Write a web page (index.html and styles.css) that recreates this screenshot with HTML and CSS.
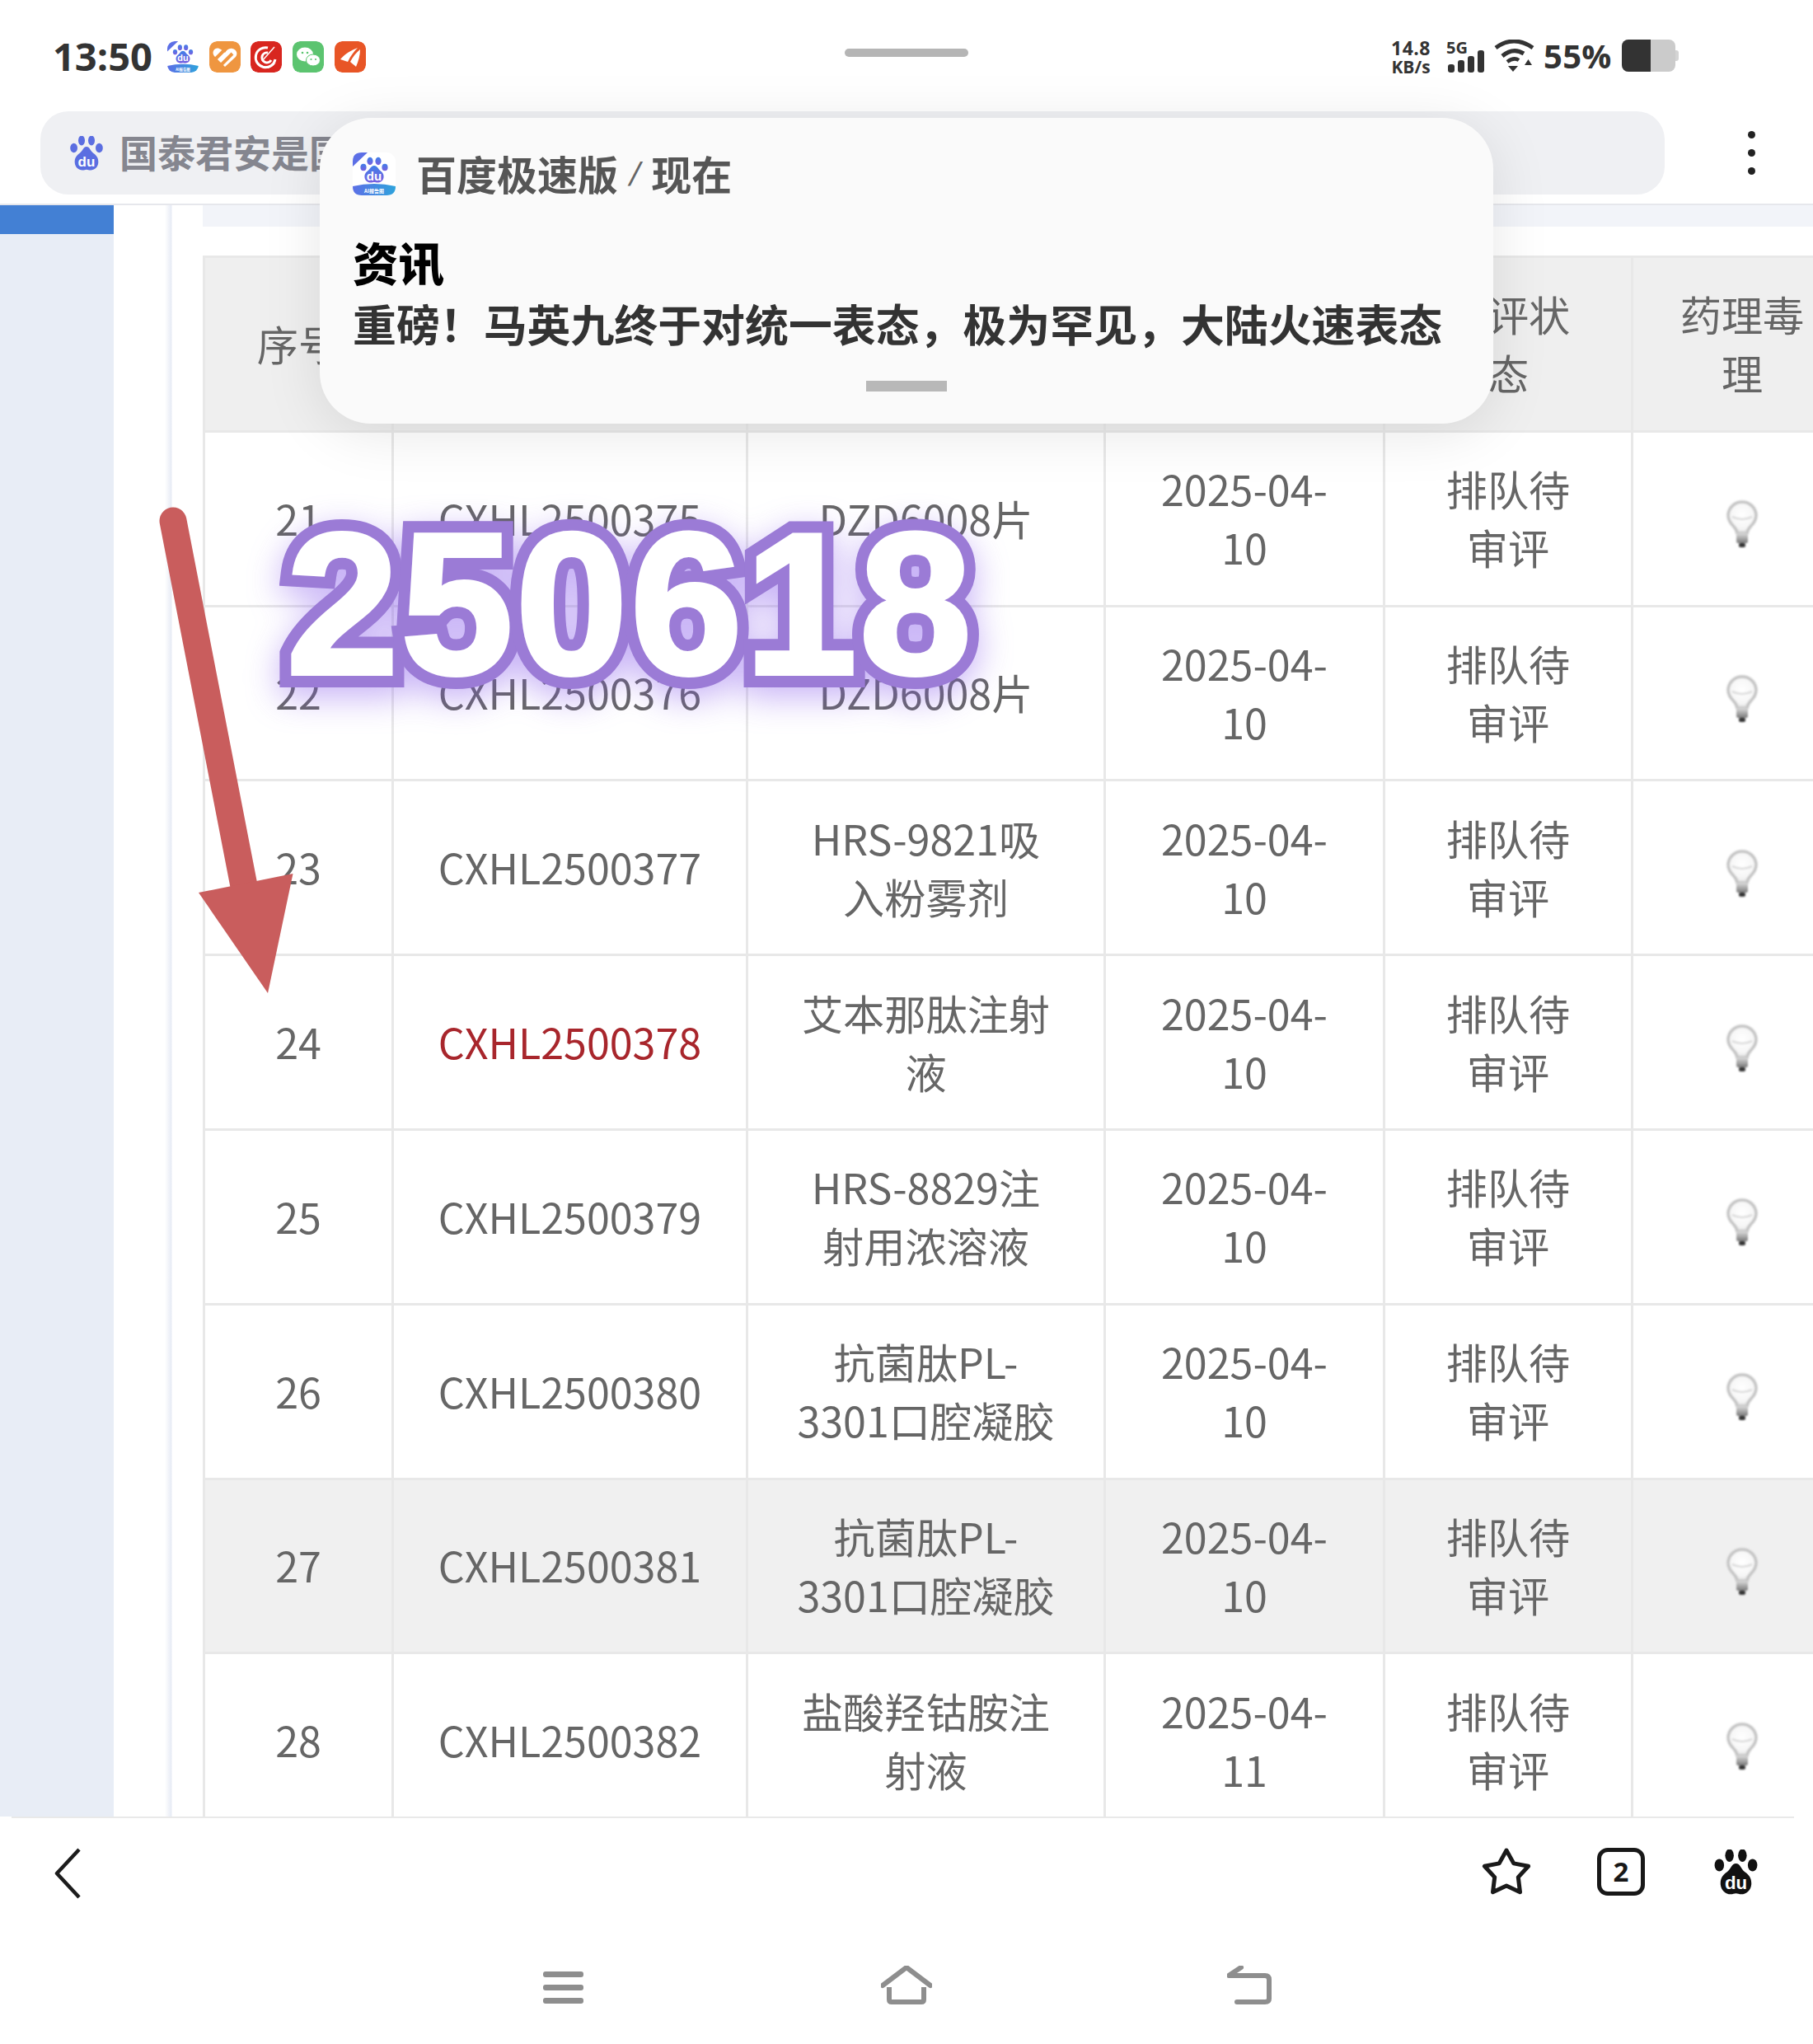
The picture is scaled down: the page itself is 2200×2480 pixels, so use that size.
FILE: index.html
```html
<!DOCTYPE html>
<html lang="zh-CN">
<head>
<meta charset="utf-8">
<title>药品审评列表</title>
<link rel="stylesheet" href="styles.css">
</head>
<body>
<svg class="defs" width="0" height="0" aria-hidden="true">
  <defs>
    <linearGradient id="pawGrad" x1="0" y1="0" x2="0" y2="1">
      <stop offset="0" stop-color="#3f7fe8"/><stop offset="1" stop-color="#7a5fe0"/>
    </linearGradient>
    <linearGradient id="bandGrad" x1="0" y1="0" x2="1" y2="0">
      <stop offset="0" stop-color="#5c6fe6"/><stop offset="1" stop-color="#2ea3dc"/>
    </linearGradient>
    <radialGradient id="glass" cx=".5" cy=".42" r=".6">
      <stop offset="0" stop-color="#fff"/><stop offset=".7" stop-color="#f6f6f6"/><stop offset="1" stop-color="#dcdcdc"/>
    </radialGradient>
    <linearGradient id="screw" x1="0" y1="0" x2="0" y2="1">
      <stop offset="0" stop-color="#dcdcdc"/><stop offset="1" stop-color="#7a7a7a"/>
    </linearGradient>
    <symbol id="paw" viewBox="0 0 40 42">
      <ellipse cx="4.6" cy="14.5" rx="4.4" ry="5.8"/>
      <ellipse cx="14" cy="5.500" rx="4" ry="6"/>
      <ellipse cx="26" cy="5.500" rx="4" ry="6"/>
      <ellipse cx="35.4" cy="14.5" rx="4.4" ry="5.8"/>
      <path d="M20 13c4 0 4.500 5 8.500 8 4 2.800 6 6 5.800 11-.3 6-4.800 9.500-9.300 9.500-2 0-3.500-.8-5-.8s-3 .8-5 .8c-4.500 0-9-3.500-9.300-9.500-.2-5 1.800-8.200 5.800-11 4-3 4.500-8 8.500-8z"/>
      <text class="paw-du" x="20" y="37" text-anchor="middle">du</text>
    </symbol>
    <symbol id="baidu-app" viewBox="0 0 52 52">
      <rect width="52" height="52" rx="11" fill="#fff"/>
      <path d="M0 41q26-6 52 0q0 11-11 11H11Q0 52 0 41z" fill="url(#bandGrad)"/>
      <path d="M0 11Q0 0 11 0h7L0 17z" fill="#5c6fe6"/>
      <g fill="url(#pawGrad)">
        <ellipse cx="13" cy="18" rx="3.600" ry="4.300"/>
        <ellipse cx="21" cy="10.500" rx="3.600" ry="4.700"/>
        <ellipse cx="31" cy="10.500" rx="3.600" ry="4.700"/>
        <ellipse cx="39" cy="18" rx="3.600" ry="4.300"/>
        <path d="M26 16c4 0 4.500 4 8 6.500 3 2.200 4 5 3.500 8-.7 4-4 6-7.500 6-1.600 0-2.600-.6-4-.6s-2.400.6-4 .6c-3.500 0-6.800-2-7.500-6-.5-3 .5-5.800 3.500-8 3.500-2.500 4-6.500 8-6.500z"/>
      </g>
      <text class="app-du" x="26" y="33.500" text-anchor="middle">du</text>
      <text class="app-band" x="26" y="49" text-anchor="middle">AI报告图</text>
    </symbol>
    <symbol id="bulb" viewBox="0 0 38 58">
      <path d="M19 2C9.500 2 2 9.500 2 18.500c0 6.500 3.500 10 6.500 13 2.500 2.500 4 5 4.500 8.500h12c.5-3.500 2-6 4.500-8.500 3-3 6.500-6.500 6.500-13C36 9.500 28.500 2 19 2z" fill="url(#glass)" stroke="#c4c4c4" stroke-width="3.500"/>
      <path d="M7 20q12 6 24 0" fill="none" stroke="#d8d8d8" stroke-width="2"/>
      <rect x="12" y="40" width="14" height="12" rx="2" fill="url(#screw)"/>
      <rect x="15" y="52" width="8" height="5" rx="2" fill="#333"/>
    </symbol>
  </defs>
</svg>

<div class="screen">
  <header class="status">
    <div class="status-left">
      <span class="clock">13:50</span>
      <div class="app-icons">
        <svg class="app-icon"><use href="#baidu-app"/></svg>
        <svg class="app-icon" viewBox="0 0 38 38"><rect width="38" height="38" rx="9" fill="#ef9640"/><path d="M19 31 6 18c-4-5 1-11 6-9 3 1 5 3 7 5 2-3 5-6 9-5 5 1 7 6 4 10z" fill="#fff"/><path d="M8 21 19 10M15 28 28 15" stroke="#ef9640" stroke-width="4"/></svg>
        <svg class="app-icon" viewBox="0 0 38 38"><rect width="38" height="38" rx="9" fill="#d8261f"/><path d="M21 8a12 12 0 1 0 9 14" fill="none" stroke="#fff" stroke-width="3"/><path d="M21 14a6 6 0 1 0 4 9" fill="none" stroke="#fff" stroke-width="3"/><path d="M29 7 14 24" stroke="#fff" stroke-width="1.500"/><path d="M11 28q10 6 20-2-6 8-14 7z" fill="#fff"/></svg>
        <svg class="app-icon" viewBox="0 0 38 38"><rect width="38" height="38" rx="9" fill="#5cc470"/><ellipse cx="15" cy="16" rx="10" ry="8.500" fill="#fff"/><ellipse cx="25" cy="23" rx="8.500" ry="7" fill="#fff" stroke="#5cc470"/><circle cx="12" cy="14" r="1.300" fill="#5cc470"/><circle cx="18" cy="14" r="1.300" fill="#5cc470"/><circle cx="22.500" cy="22" r="1.100" fill="#5cc470"/><circle cx="28" cy="22" r="1.100" fill="#5cc470"/></svg>
        <svg class="app-icon" viewBox="0 0 38 38"><rect width="38" height="38" rx="9" fill="#e85526"/><path d="M7 22C13 15 20 11 28 8 24 12 19 18 16 25z" fill="#fff"/><path d="M19 25C22 19 26 14 31 10 31 17 29 24 26 31 24 29 21 27 19 25z" fill="#fff"/></svg>
      </div>
    </div>
    <div class="status-handle"></div>
    <div class="status-right">
      <div class="speed"><span class="speed-num">14.8</span><span class="speed-unit">KB/s</span></div>
      <div class="signal">
        <span class="signal-label">5G</span>
        <svg class="signal-bars" viewBox="0 0 44 27"><rect x="0" y="17" width="8" height="10" rx="3"/><rect x="12" y="12" width="8" height="15" rx="3"/><rect x="24" y="7" width="8" height="20" rx="3"/><rect x="36" y="0" width="8" height="27" rx="3"/></svg>
      </div>
      <svg class="wifi" viewBox="0 0 49 39"><path d="M2 10Q24-6 47 10" fill="none" stroke="#333" stroke-width="5"/><path d="M10 20Q23 9 36 17" fill="none" stroke="#333" stroke-width="5"/><path d="M15 28q8-6 14-2" fill="none" stroke="#333" stroke-width="4.500" transform="translate(1 -1)"/><path d="M17 32h12l-6 7z" fill="#333"/><path d="M37 31l4.500-7 4.500 7z" fill="#333"/></svg>
      <span class="battery-pct">55%</span>
      <div class="battery"><div class="battery-level"></div></div>
    </div>
  </header>

  <div class="addressbar">
    <div class="search">
      <svg class="search-paw"><use href="#paw"/></svg>
      <span class="search-text">国泰君安是国内领先的综合金融服务商</span>
    </div>
    <div class="more"><i></i><i></i><i></i></div>
  </div>

  <div class="content">
    <aside class="sidebar"><div class="sidebar-active"></div></aside>
    <div class="rail"></div>
    <main class="main">
      <div class="top-strip"></div>
      <table class="grid">
        <colgroup>
          <col class="c1"><col class="c2"><col class="c3"><col class="c4"><col class="c5"><col class="c6">
        </colgroup>
        <thead>
          <tr><th>序号</th><th>受理号</th><th>药品名称</th><th>承办日期</th><th class="p-s">审评状态</th><th class="p-t">药理毒理</th></tr>
        </thead>
        <tbody>
          <tr><td>21</td><td>CXHL2500375</td><td class="p-n">DZD6008片</td><td class="p-d">2025-04-10</td><td class="p-s">排队待审评</td><td><svg class="bulb"><use href="#bulb"/></svg></td></tr>
          <tr><td>22</td><td>CXHL2500376</td><td class="p-n">DZD6008片</td><td class="p-d">2025-04-10</td><td class="p-s">排队待审评</td><td><svg class="bulb"><use href="#bulb"/></svg></td></tr>
          <tr><td>23</td><td>CXHL2500377</td><td class="p-n">HRS-9821吸入粉雾剂</td><td class="p-d">2025-04-10</td><td class="p-s">排队待审评</td><td><svg class="bulb"><use href="#bulb"/></svg></td></tr>
          <tr><td>24</td><td class="code-red">CXHL2500378</td><td class="p-n">艾本那肽注射液</td><td class="p-d">2025-04-10</td><td class="p-s">排队待审评</td><td><svg class="bulb"><use href="#bulb"/></svg></td></tr>
          <tr><td>25</td><td>CXHL2500379</td><td class="p-n">HRS-8829注射用浓溶液</td><td class="p-d">2025-04-10</td><td class="p-s">排队待审评</td><td><svg class="bulb"><use href="#bulb"/></svg></td></tr>
          <tr><td>26</td><td>CXHL2500380</td><td class="p-n">抗菌肽PL-3301口腔凝胶</td><td class="p-d">2025-04-10</td><td class="p-s">排队待审评</td><td><svg class="bulb"><use href="#bulb"/></svg></td></tr>
          <tr class="alt"><td>27</td><td>CXHL2500381</td><td class="p-n">抗菌肽PL-3301口腔凝胶</td><td class="p-d">2025-04-10</td><td class="p-s">排队待审评</td><td><svg class="bulb"><use href="#bulb"/></svg></td></tr>
          <tr><td>28</td><td>CXHL2500382</td><td class="p-n">盐酸羟钴胺注射液</td><td class="p-d">2025-04-11</td><td class="p-s">排队待审评</td><td><svg class="bulb"><use href="#bulb"/></svg></td></tr>
        </tbody>
      </table>
    </main>
  </div>

  <footer class="bottom">
    <div class="toolbar">
      <svg class="tool-back" viewBox="0 0 32 62"><path d="M30 2 3 31l27 29" fill="none" stroke="#1c1c1c" stroke-width="4.500" stroke-linejoin="round"/></svg>
      <div class="tool-right">
        <svg class="tool-star" viewBox="0 0 60 58"><path d="M30 3 38.800 18.900 56.600 22.300 44.300 35.600 46.500 53.700 30 46 13.500 53.700 15.700 35.600 3.400 22.300 21.200 18.900z" fill="none" stroke="#1a1a1a" stroke-width="5" stroke-linejoin="round"/></svg>
        <div class="tool-tabs">2</div>
        <svg class="tool-paw"><use href="#paw"/></svg>
      </div>
    </div>
    <nav class="navbar">
      <div class="nav-menu"><i></i><i></i><i></i></div>
      <svg class="nav-home" viewBox="0 0 62 47"><path d="M2 24 31 2l29 22" fill="none" stroke="#8e8e8e" stroke-width="6" stroke-linecap="round" stroke-linejoin="round"/><path d="M10 26v15q0 3 3 3h36q3 0 3-3V26" fill="none" stroke="#8e8e8e" stroke-width="6"/></svg>
      <svg class="nav-back" viewBox="0 0 54 47"><path d="M17 2 2 12h44q5 0 5 5v23q0 4-5 4H12" fill="none" stroke="#8e8e8e" stroke-width="6" stroke-linecap="round" stroke-linejoin="round"/></svg>
    </nav>
  </footer>

  <section class="notice">
    <div class="notice-head">
      <svg class="notice-icon"><use href="#baidu-app"/></svg>
      <span class="notice-app">百度极速版</span>
      <span class="notice-sep">/</span>
      <span class="notice-time">现在</span>
    </div>
    <div class="notice-title">资讯</div>
    <div class="notice-body">重磅！马英九终于对统一表态，极为罕见，大陆火速表态</div>
    <div class="notice-handle"></div>
  </section>

  <svg class="arrow" viewBox="0 0 200 620" aria-hidden="true">
    <path d="M20 12 106 455" fill="none" stroke="#c95d5d" stroke-width="33" stroke-linecap="round"/>
    <path d="M51 463 165.500 440 135 585z" fill="#c95d5d"/>
  </svg>

  <div class="stamp"><span data-d="2">2</span><span data-d="5">5</span><span data-d="0">0</span><span data-d="6">6</span><span data-d="1">1</span><span data-d="8">8</span></div>
</div>
</body>
</html>
```
FILE: styles.css
```css
* { box-sizing: border-box; }
html, body { margin: 0; padding: 0; background: #fff; }
body { font-family: "Noto Sans CJK SC", "Noto Sans", sans-serif; }
.defs { position: absolute; }

.screen {
  position: relative;
  width: 2200px;
  height: 2480px;
  overflow: hidden;
  display: flex;
  flex-direction: column;
  background: #fff;
}

/* status bar */
.status {
  flex: 0 0 135px;
  display: grid;
  grid-template-columns: 1fr 150px 1fr;
  padding: 48px 66px 0;
  align-items: start;
}
.status-left { display: flex; align-items: center; }
.clock {
  font: 700 47px/40px "Open Sans", sans-serif;
  color: #333;
  width: 137px;
  margin-left: -2px;
  margin-right: 1px;
}
.app-icons { display: flex; gap: 12.700px; margin-top: 1px; margin-left: 1px; }
.app-icon { width: 38px; height: 38px; border-radius: 9px; }
.status-handle { height: 10px; margin-top: 11px; background: #b5b5b5; border-radius: 5px; }
.status-right { display: flex; justify-content: flex-end; margin-right: 97px; font-family: "Open Sans", sans-serif; color: #333; }
.speed { display: flex; flex-direction: column; align-items: center; width: 48px; font-weight: 700; margin-right: 19px; }
.speed-num { font-size: 23px; line-height: 20px; letter-spacing: .5px; white-space: nowrap; }
.speed-unit { font-size: 21px; line-height: 22px; margin-top: 2px; white-space: nowrap; }
.signal { width: 46px; display: flex; flex-direction: column; margin-right: 12px; position: relative; height: 40px; }
.signal-label { font-size: 20px; font-weight: 700; line-height: 20px; }
.signal-bars { position: absolute; left: 2px; bottom: 0; width: 44px; height: 27px; fill: #333; }
.wifi { width: 49px; height: 39px; margin-right: 11px; }
.battery-pct { font-size: 40px; font-weight: 700; line-height: 40px; width: 95px; letter-spacing: .3px; }
.battery {
  width: 65px;
  height: 39px;
  border-radius: 8px;
  background: #cbcbcb;
  position: relative;
  margin-right: 4px;
}
.battery::after {
  content: "";
  position: absolute;
  right: -4px;
  top: 13px;
  width: 4px;
  height: 13px;
  border-radius: 0 3px 3px 0;
  background: #d4d4d4;
}
.battery-level { width: 35px; height: 100%; background: #333; border-radius: 8px 0 0 8px; }

/* address bar */
.addressbar {
  flex: 0 0 114px;
  display: flex;
  align-items: flex-start;
  padding-left: 49px;
  border-bottom: 2px solid #e6e7ec;
}
.search {
  width: 1971px;
  height: 101px;
  background: #eff0f3;
  border-radius: 34px;
  display: flex;
  align-items: center;
  padding-left: 36px;
  overflow: hidden;
  flex: none;
}
.search-paw { width: 40px; height: 42px; fill: #5b6ee1; flex: none; }
.paw-du { font: 700 17px "Liberation Sans", sans-serif; fill: #fff; }
.search-text { margin: 0 0 5px 20px; font-size: 46px; font-weight: 700; color: #85868f; white-space: nowrap; }
.app-du { font: 700 15px "Liberation Sans", sans-serif; fill: #fff; }
.app-band { font: 700 6px "Noto Sans CJK SC", sans-serif; fill: #fff; }
.more { flex: 1 1 0; display: flex; flex-direction: column; align-items: center; gap: 13px; padding: 24px 0 0 30px; }
.more i { width: 9px; height: 9px; border-radius: 50%; background: #222; display: block; }

/* page */
.content { flex: 1 1 0; min-height: 0; display: flex; overflow: hidden; }
.sidebar { flex: 0 0 138px; background: #e8edf6; }
.sidebar-active { height: 35px; background: #4380d4; }
.rail {
  flex: 0 0 108px;
  background: linear-gradient(90deg, #fff 0, #fff 62px, #e7ebf5 70px, #fff 71px);
}
.main { flex: 1 1 0; min-width: 0; overflow: hidden; }
.top-strip { height: 26px; margin-bottom: 35px; background: #f2f4f9; }

.grid {
  table-layout: fixed;
  border-collapse: collapse;
  width: 2000px;
  color: #666;
  font-size: 50.200px;
  line-height: 71px;
  text-align: center;
}
.c1 { width: 229px; }
.c2 { width: 430px; }
.c3 { width: 434px; }
.c4 { width: 339px; }
.c5 { width: 301px; }
.c6 { width: 267px; }
.grid th, .grid td {
  height: 211.800px;
  border: 3px solid #e8e8e8;
  font-weight: 400;
  padding: 0 0 2px;
}
.grid thead th { background: #efefef; }
.grid th.p-t { padding: 0 50px 2px; }
.grid .p-n { padding: 0 57px 2px; }
.grid .p-d, .grid .p-s { padding: 0 60px 2px; }
.grid tr.alt td { background: #f0f0f0; }
.code-red { color: #a8262c; }
.bulb { width: 38px; height: 58px; display: block; margin: 16px auto 0; filter: blur(.9px); }

/* bottom */
.bottom { flex: 0 0 276px; display: flex; flex-direction: column; }
.toolbar {
  flex: 0 0 136px;
  margin: 0 23px 0 14px;
  border-top: 2px solid #e9e9e9;
  display: flex;
  justify-content: space-between;
  align-items: flex-start;
  padding: 36px 44px 0 52px;
}
.tool-back { width: 32px; height: 62px; }
.tool-right { display: flex; align-items: center; gap: 80px; }
.tool-star { width: 60px; height: 58px; }
.tool-tabs {
  width: 58px;
  height: 58px;
  border: 5px solid #181818;
  border-radius: 13px;
  font: 700 33px/48px "Open Sans", sans-serif;
  color: #181818;
  text-align: center;
}
.tool-paw { width: 53px; height: 55px; fill: #111; margin-left: 4px; }
.navbar {
  flex: 1 1 0;
  display: flex;
  align-items: flex-start;
  padding: 45px 0 0 659px;
}
.nav-menu { width: 49px; display: flex; flex-direction: column; gap: 9px; padding-top: 7px; }
.nav-menu i { height: 7px; border-radius: 3px; background: #8e8e8e; display: block; }
.nav-home { width: 62px; height: 47px; margin-left: 361px; }
.nav-back { width: 54px; height: 47px; margin-left: 358px; }

/* heads-up notification */
.notice {
  position: absolute;
  left: 388px;
  top: 143px;
  width: 1424px;
  height: 371px;
  border-radius: 62px;
  background: #fafafa;
  box-shadow: 0 10px 70px rgba(0, 0, 0, .1);
  padding: 41px 30px 0 40px;
}
.notice-head { display: flex; align-items: center; height: 52px; margin-top: 1px; }
.notice-icon { width: 52px; height: 52px; flex: none; margin-right: 25px; }
.notice-app, .notice-time { font-size: 49px; line-height: 52px; font-weight: 700; color: #565656; white-space: nowrap; margin-top: -3px; }
.notice-sep { font: 400 40px "Liberation Sans", sans-serif; color: #666; margin: 0 14px 0 15px; transform: skewX(-14deg); }
.notice-title { margin-top: 43px; font-size: 55.500px; line-height: 74px; font-weight: 900; color: #000; }
.notice-body { margin-top: 3px; font-size: 52.900px; line-height: 70px; font-weight: 700; color: #333; white-space: nowrap; }
.notice-handle { position: absolute; left: 663px; top: 319px; width: 98px; height: 13px; background: #b8b8b8; }

/* annotations on the screenshot */
.arrow { position: absolute; left: 190px; top: 620px; width: 200px; height: 620px; overflow: visible; }
.stamp {
  position: absolute;
  left: 348px;
  top: 583px;
  display: flex;
  font: 700 243px/300px "Liberation Sans", sans-serif;
  color: #fff;
  filter: drop-shadow(0 12px 20px rgba(130, 85, 235, .45));
}
.stamp span {
  position: relative;
  -webkit-text-stroke: 34px #9b7bd6;
  paint-order: stroke fill;
  margin-right: 3.900px;
}
.stamp span::after {
  content: attr(data-d);
  position: absolute;
  left: 0;
  top: 0;
  -webkit-text-stroke: 6px #fff;
}
```
